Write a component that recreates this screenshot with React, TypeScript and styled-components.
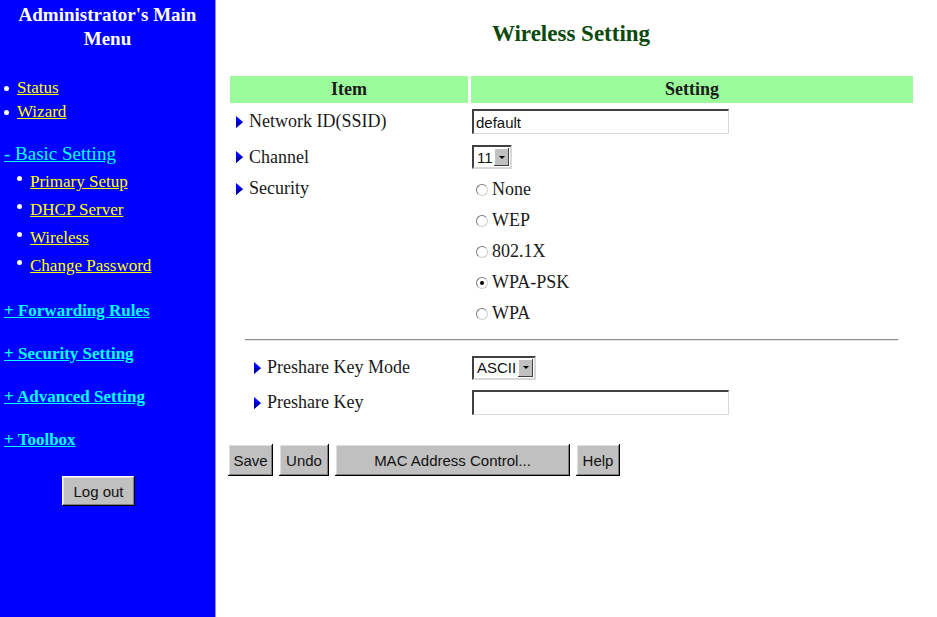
import styled, { createGlobalStyle } from "styled-components"

const GlobalStyle = createGlobalStyle`
  html, body {
    margin: 0;
    padding: 0;
    background: #ffffff;
  }
  body {
    font-family: "Liberation Serif", "Times New Roman", serif;
    color: #1a1a1a;
  }
`

/**
 * Page frame
 */

const Page = styled.div`
  display: flex;
  min-height: 617px;
  width: 937px;
  overflow: hidden;
`

const Sidebar = styled.nav`
  flex: 0 0 216px;
  background: #0000ff;
  border-right: 1px solid #8c8cff;
  padding: 3px 0 0 4px;
  box-sizing: border-box;
  display: flex;
  flex-direction: column;
`

const MenuTitle = styled.h1`
  margin: 0;
  color: #ffffff;
  font-size: 19px;
  font-weight: bold;
  line-height: 24px;
  text-align: center;
  padding-right: 4px;
`

const TopList = styled.ul`
  list-style: none;
  margin: 25px 0 0 0;
  padding: 0;
`

const SubList = styled.ul`
  list-style: none;
  margin: 0;
  padding: 0 0 0 13px;
`

const Item = styled.li<{ $h: number }>`
  display: flex;
  align-items: center;
  gap: 8px;
  height: ${(p) => p.$h}px;

  &::before {
    content: "";
    width: 5px;
    height: 5px;
    border-radius: 50%;
    background: #ffffff;
    margin-top: ${(p) => (p.$h > 25 ? "-8px" : "0")};
  }
`

const YellowLink = styled.a`
  color: #ffff00;
  font-size: 17px;
  text-decoration: underline;
  cursor: pointer;
`

const SectionLink = styled.a<{ $bold?: boolean }>`
  display: flex;
  align-items: center;
  height: 43px;
  color: #00ffff;
  font-size: ${(p) => (p.$bold ? "17px" : "19px")};
  font-weight: ${(p) => (p.$bold ? "bold" : "normal")};
  text-decoration: underline;
  cursor: pointer;
  align-self: flex-start;
`

const WinButton = styled.button<{ $w: number }>`
  width: ${(p) => p.$w}px;
  height: 32px;
  padding: 0;
  background: #c0c0c0;
  color: #111;
  font-family: "Liberation Sans", Arial, sans-serif;
  font-size: 15px;
  border: none;
  box-shadow:
    inset -1px -1px 0 #000000,
    inset 1px 1px 0 #ffffff,
    inset -2px -2px 0 #808080,
    inset 2px 2px 0 #dfdfdf;
  cursor: pointer;
`

const LogoutWrap = styled.div`
  margin: 15px 0 0 58px;
`

/**
 * Main area
 */

const Main = styled.main`
  flex: 1;
  padding: 19px 24px 0 13px;
  box-sizing: border-box;
`

const PageTitle = styled.h2`
  margin: 0;
  height: 34px;
  color: #0b4a0b;
  font-size: 23px;
  font-weight: bold;
  text-align: center;
  line-height: 30px;
`

const Grid = styled.div`
  margin: 23px 0 0 1px;
`

const HeadRow = styled.div`
  display: grid;
  grid-template-columns: 238px 1fr;
  gap: 3px;
  height: 27px;
`

const HeadCell = styled.div`
  background: #9cfc9c;
  font-size: 18px;
  font-weight: bold;
  display: flex;
  align-items: center;
  justify-content: center;
`

const Row = styled.div<{ $h: number; $indent?: number }>`
  display: grid;
  grid-template-columns: ${(p) => 241 - (p.$indent || 0)}px 1fr;
  align-items: ${(p) => (p.$h > 60 ? "start" : "center")};
  min-height: ${(p) => p.$h}px;
  padding-left: ${(p) => p.$indent || 0}px;
`

const Label = styled.div<{ $top?: number }>`
  display: flex;
  align-items: center;
  gap: 6px;
  padding-left: 6px;
  font-size: 18px;
  margin-top: ${(p) => p.$top || 0}px;
`

const Field = styled.div`
  padding-left: 1px;
`

const TextBox = styled.input`
  width: 257px;
  height: 25px;
  box-sizing: border-box;
  font-family: "Liberation Sans", Arial, sans-serif;
  font-size: 15px;
  padding: 0 2px;
  background: #fff;
  border-style: solid;
  border-width: 2px 1px 1px 2px;
  border-color: #404040 #d8d8d8 #d8d8d8 #404040;
  outline: none;
  color: #111;
`

const FakeSelect = styled.div<{ $w: number }>`
  display: inline-flex;
  align-items: center;
  width: ${(p) => p.$w}px;
  height: 24px;
  box-sizing: border-box;
  border-style: solid;
  border-width: 2px;
  border-color: #404040 #d8d8d8 #d8d8d8 #404040;
  background: #fff;
  font-family: "Liberation Sans", Arial, sans-serif;
  font-size: 15px;
  color: #111;
`

const SelectValue = styled.span`
  flex: 1;
  padding-left: 3px;
`

const SelectArrow = styled.span`
  width: 15px;
  height: 18px;
  margin-right: 1px;
  background: #c0c0c0;
  box-shadow:
    inset -1px -1px 0 #404040,
    inset 1px 1px 0 #ffffff;
  display: flex;
  align-items: center;
  justify-content: center;

  &::after {
    content: "";
    border-left: 3px solid transparent;
    border-right: 3px solid transparent;
    border-top: 3px solid #000;
  }
`

const RadioList = styled.div`
  display: flex;
  flex-direction: column;
`

const RadioOption = styled.label`
  display: flex;
  align-items: center;
  gap: 4px;
  height: 31px;
  padding-left: 5px;
  font-size: 18px;
`

const RadioDot = styled.span<{ $on?: boolean }>`
  width: 10px;
  height: 10px;
  border-radius: 50%;
  border: 1px solid #7a7a7a;
  border-right-color: #cfcfcf;
  border-bottom-color: #cfcfcf;
  background: #fff;
  display: flex;
  align-items: center;
  justify-content: center;

  &::after {
    content: "";
    display: ${(p) => (p.$on ? "block" : "none")};
    width: 4px;
    height: 4px;
    border-radius: 50%;
    background: #000;
  }
`

const Divider = styled.hr`
  margin: 10px 15px 9px 15px;
  border: none;
  border-top: 1px solid #8a8a8a;
  border-bottom: 1px solid #e8e8e8;
`

const ButtonBar = styled.div`
  display: flex;
  gap: 6px;
  margin: 24px 0 0 -1px;
`

const Arrow = () => (
  <svg width="7" height="12" viewBox="0 0 7 12">
    <polygon points="0,0 7,6 0,12" fill="#0000ff" />
    <polygon points="0,6 7,6 0,12" fill="#0000b0" />
  </svg>
)

const securityOptions = ["None", "WEP", "802.1X", "WPA-PSK", "WPA"]

export default function App() {
  return (
    <>
      <GlobalStyle />
      <Page>
        <Sidebar>
          <MenuTitle>
            Administrator's Main
            <br />
            Menu
          </MenuTitle>

          <TopList>
            <Item $h={24}>
              <YellowLink>Status</YellowLink>
            </Item>
            <Item $h={24}>
              <YellowLink>Wizard</YellowLink>
            </Item>
          </TopList>

          <SectionLink style={{ marginTop: 8 }}>- Basic Setting</SectionLink>
          <SubList style={{ marginTop: -7 }}>
            <Item $h={28}>
              <YellowLink>Primary Setup</YellowLink>
            </Item>
            <Item $h={28}>
              <YellowLink>DHCP Server</YellowLink>
            </Item>
            <Item $h={28}>
              <YellowLink>Wireless</YellowLink>
            </Item>
            <Item $h={28}>
              <YellowLink>Change Password</YellowLink>
            </Item>
          </SubList>

          <SectionLink $bold style={{ marginTop: 9 }}>
            + Forwarding Rules
          </SectionLink>
          <SectionLink $bold>+ Security Setting</SectionLink>
          <SectionLink $bold>+ Advanced Setting</SectionLink>
          <SectionLink $bold>+ Toolbox</SectionLink>

          <LogoutWrap>
            <WinButton $w={73} style={{ height: 30 }}>
              Log out
            </WinButton>
          </LogoutWrap>
        </Sidebar>

        <Main>
          <PageTitle>Wireless Setting</PageTitle>

          <Grid>
            <HeadRow>
              <HeadCell>Item</HeadCell>
              <HeadCell>Setting</HeadCell>
            </HeadRow>

            <Row $h={37}>
              <Label>
                <Arrow />
                Network ID(SSID)
              </Label>
              <Field>
                <TextBox defaultValue="default" />
              </Field>
            </Row>

            <Row $h={34}>
              <Label>
                <Arrow />
                Channel
              </Label>
              <Field>
                <FakeSelect $w={40}>
                  <SelectValue>11</SelectValue>
                  <SelectArrow />
                </FakeSelect>
              </Field>
            </Row>

            <Row $h={155}>
              <Label $top={4}>
                <Arrow />
                Security
              </Label>
              <RadioList>
                {securityOptions.map((opt) => (
                  <RadioOption key={opt}>
                    <RadioDot $on={opt === "WPA-PSK"} />
                    {opt}
                  </RadioOption>
                ))}
              </RadioList>
            </Row>

            <Divider />

            <Row $h={35} $indent={18}>
              <Label>
                <Arrow />
                Preshare Key Mode
              </Label>
              <Field>
                <FakeSelect $w={64}>
                  <SelectValue>ASCII</SelectValue>
                  <SelectArrow />
                </FakeSelect>
              </Field>
            </Row>

            <Row $h={35} $indent={18}>
              <Label>
                <Arrow />
                Preshare Key
              </Label>
              <Field>
                <TextBox />
              </Field>
            </Row>
          </Grid>

          <ButtonBar>
            <WinButton $w={45}>Save</WinButton>
            <WinButton $w={50}>Undo</WinButton>
            <WinButton $w={235}>MAC Address Control...</WinButton>
            <WinButton $w={44}>Help</WinButton>
          </ButtonBar>
        </Main>
      </Page>
    </>
  )
}
